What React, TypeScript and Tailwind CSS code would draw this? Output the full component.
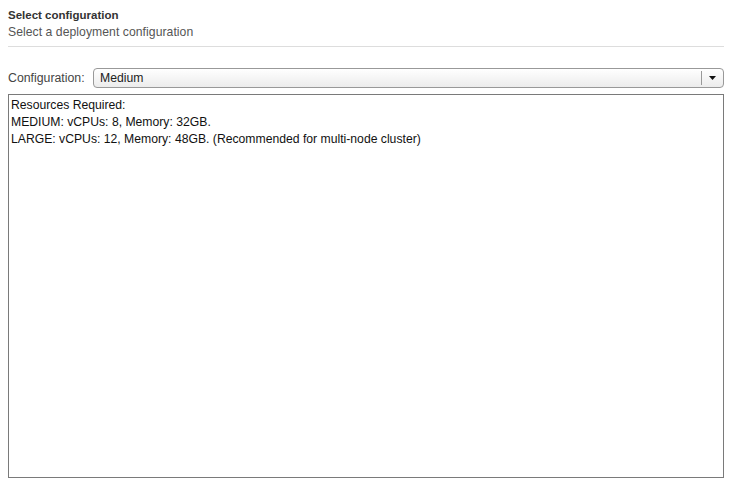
export default function App() {
  return (
    <div
      className="w-[739px] h-[486px] bg-white overflow-hidden pl-2 pr-[15px] pt-[7px]"
      style={{ fontFamily: '"Liberation Sans", Arial, sans-serif' }}
    >
      <div className="text-[11.5px] leading-4 font-bold text-[#333]">Select configuration</div>
      <div className="text-[12.2px] leading-4 text-[#555] mt-px tracking-[0.05px]">Select a deployment configuration</div>
      <div className="h-px bg-[#dddddd] mt-[6px]" />
      <div className="flex items-center mt-[21px] h-5">
        <span className="text-[12.3px] text-[#444] w-[85px] shrink-0">Configuration:</span>
        <div className="flex-1 h-5 border border-[#999] rounded-[4px] bg-gradient-to-b from-white to-[#ececec] flex items-center">
          <span className="flex-1 pl-[6px] text-[12.2px] text-[#222]">Medium</span>
          <div className="w-px h-[14px] bg-[#999]" />
          <div className="w-[21px] flex items-center justify-center">
            <svg width="7" height="4" viewBox="0 0 7 4">
              <polygon points="0,0 7,0 3.5,4" fill="#111" />
            </svg>
          </div>
        </div>
      </div>
      <div className="mt-[6px] h-[384px] border border-[#7a7a7a] px-[2px] pt-[2px] text-[12.2px] leading-[17px] text-[#111]">
        <div>Resources Required:</div>
        <div>MEDIUM: vCPUs: 8, Memory: 32GB.</div>
        <div>LARGE: vCPUs: 12, Memory: 48GB. (Recommended for multi-node cluster)</div>
      </div>
    </div>
  );
}
